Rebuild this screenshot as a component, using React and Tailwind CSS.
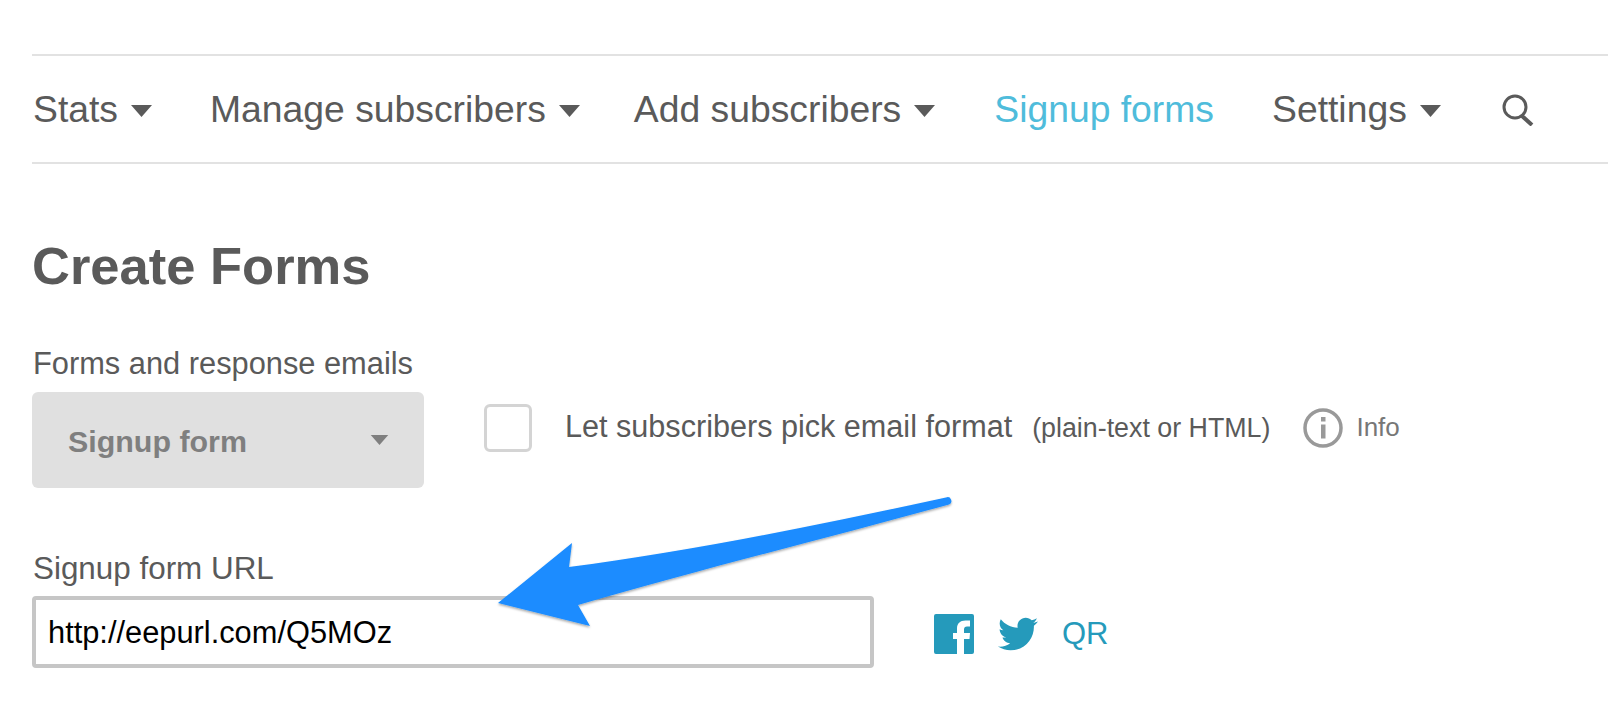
import { FaTwitter } from 'react-icons/fa'

const font = { fontFamily: '"Liberation Sans", Arial, sans-serif' }

function Caret({ className }) {
	return (
		<svg className={className} width="21" height="12" viewBox="0 0 21 12">
			<path d="M0 0H21L10.5 12Z" fill="currentColor" />
		</svg>
	)
}

function NavItem({ label, className, caret = true, color = 'text-[#5a5a5a]' }) {
	return (
		<a className={`flex items-center ${color} ${className}`}>
			<span>{label}</span>
			{caret && <Caret className="ml-[13px] mt-[3px] text-[#5a5a5a]" />}
		</a>
	)
}

function Facebook() {
	return (
		<svg width="40" height="40" viewBox="0 0 40 40">
			<path
				fill="#259abb"
				d="M2 0H38A2 2 0 0 1 40 2V38A2 2 0 0 1 38 40H30V25H35.500L36 19H30V15.500C30 13.500 31 12.500 33 12.500H36V6.500H31.500C26 6.500 23 9.500 23 14.500V19H19V25H23V40H2A2 2 0 0 1 0 38V2A2 2 0 0 1 2 0Z"
			/>
		</svg>
	)
}

export default function App() {
	return (
		<div style={font} className="relative h-[706px] w-[1608px] overflow-hidden bg-white pl-[32px]">
			<div className="h-[54px]" />

			{/* nav */}
			<nav className="flex h-[110px] items-center border-y-2 border-[#e2e2e2] pt-[2px] text-[37.300px] leading-none">
				<NavItem label="Stats" className="ml-[1px]" />
				<NavItem label="Manage subscribers" className="ml-[58px]" />
				<NavItem label="Add subscribers" className="ml-[54px]" />
				<NavItem label="Signup forms" caret={false} color="text-[#4fbcdb]" className="ml-[59px]" />
				<NavItem label="Settings" className="ml-[58px]" />
				<svg className="ml-[61px]" width="32" height="32" viewBox="0 0 32 32" fill="none" stroke="#5a5a5a">
					<circle cx="13" cy="13" r="11" strokeWidth="3" />
					<path d="M20 22L30 31" strokeWidth="4" />
				</svg>
			</nav>

			<h1 className="mt-[72px] text-[52.500px] font-bold leading-[60px] text-[#5a5a5a]">Create Forms</h1>

			<div className="ml-[1px] mt-[50px] text-[30.800px] leading-[36px] text-[#5a5a5a]">Forms and response emails</div>

			<div className="mt-[10px] flex">
				<div className="flex h-[96px] w-[392px] items-center justify-between rounded-[6px] bg-[#e0e0e0] pl-[36px] pr-[35px]">
					<span className="mt-[4px] text-[30.400px] font-bold text-[#7f7f7f]">Signup form</span>
					<Caret className="h-[10px] w-[19px] text-[#7f7f7f]" />
				</div>
				<div className="ml-[60px] mt-[12px] flex h-[48px] items-center">
					<div className="h-[48px] w-[48px] rounded-[6px] border-[3px] border-[#d4d4d4]" />
					<span className="ml-[33px] mb-[2px] text-[30.600px] text-[#5a5a5a]">Let subscribers pick email format</span>
					<span className="ml-[20px] text-[26.800px] text-[#5a5a5a]">(plain-text or HTML)</span>
					<svg className="ml-[33px]" width="40" height="40" viewBox="0 0 40 40">
						<circle cx="20" cy="20" r="18" fill="none" stroke="#999999" strokeWidth="3.500" />
						<rect x="18" y="9" width="4.500" height="4.500" fill="#999999" />
						<rect x="18" y="16.500" width="4.500" height="14" fill="#999999" />
					</svg>
					<span className="ml-[13px] mb-[2px] text-[26px] text-[#777777]">Info</span>
				</div>
			</div>

			<div className="ml-[1px] mt-[63px] text-[31.400px] leading-[36px] text-[#5a5a5a]">Signup form URL</div>

			<div className="mt-[9px] flex items-center">
				<div className="flex h-[72px] w-[842px] items-center rounded-[4px] border-4 border-[#c6c6c6] pl-[12px] pt-[2px] text-[30.800px] text-black">
					http://eepurl.com/Q5MOz
				</div>
				<div className="ml-[60px] mt-[4px] flex items-center text-[#259abb]">
					<Facebook />
					<FaTwitter className="ml-[24px] h-[40px] w-[40px]" />
					<span className="ml-[24px] text-[31px]">QR</span>
				</div>
			</div>

			{/* annotation arrow */}
			<svg className="pointer-events-none absolute left-0 top-0" width="1608" height="706" viewBox="0 0 1608 706">
				<defs>
					<filter id="arrow-shadow" x="-10%" y="-10%" width="120%" height="130%">
						<feDropShadow dx="0" dy="1.500" stdDeviation="1" floodColor="#000000" floodOpacity="0.35" />
					</filter>
				</defs>
				<path
					filter="url(#arrow-shadow)"
					fill="#1a8cff"
					d="M569 567C680 553 820 525 946 497.500A3.500 3.500 0 0 1 949 504.500C820 540 690 572 578 605L590 626L498 603L572 543Z"
				/>
			</svg>
		</div>
	)
}
